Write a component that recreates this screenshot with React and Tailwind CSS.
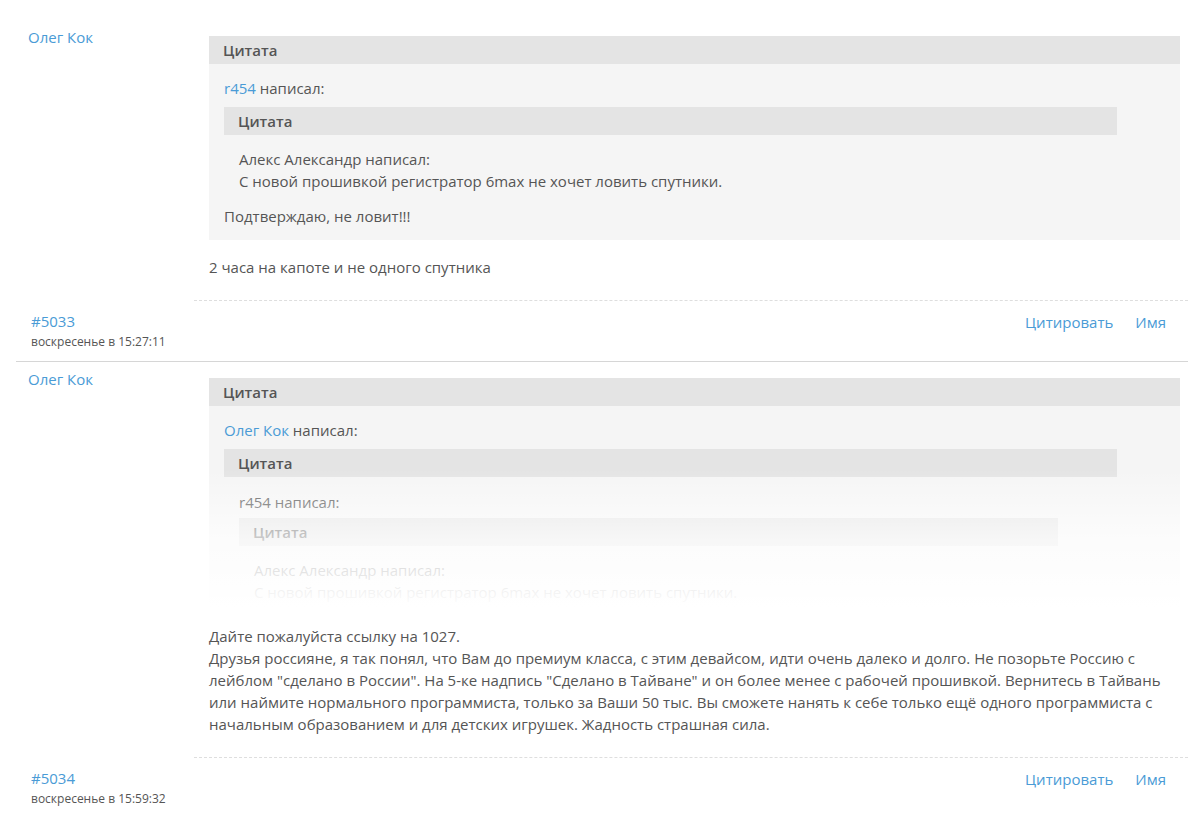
const posts = [
  {
    id: 5033,
    author: 'Олег Кок',
    date: 'воскресенье в 15:27:11',
    clipped: false,
  },
  {
    id: 5034,
    author: 'Олег Кок',
    date: 'воскресенье в 15:59:32',
    clipped: true,
  },
];

const Quote = ({ width, pt = 'pt-[13px]', children, clipped }) => (
  <div className={`bg-[#f5f5f5] ${width} ${clipped ? 'relative max-h-[231px] overflow-hidden' : ''}`}>
    <div className="h-7 bg-[#e4e4e4] pl-[14px] font-semibold leading-7 text-[#555]">Цитата</div>
    <div className={`px-[15px] pb-[13px] ${pt}`}>{children}</div>
    {clipped && (
      <div className="absolute bottom-0 left-0 right-0 h-[140px] bg-gradient-to-b from-white/0 via-white/70 to-white"></div>
    )}
  </div>
);

const FirstBody = () => (
  <>
    <Quote width="w-full">
      <div>
        <a href="#" className="text-[#4a9bd6]">r454</a> написал:
      </div>
      <div className="mt-2">
        <Quote width="w-[893px]">
          <div>Алекс Александр написал:</div>
          <div>С новой прошивкой регистратор 6max не хочет ловить спутники.</div>
        </Quote>
      </div>
      <div>Подтверждаю, не ловит!!!</div>
    </Quote>
    <p className="mt-4">2 часа на капоте и не одного спутника</p>
  </>
);

const SecondBody = () => (
  <>
    <Quote width="w-full" clipped>
      <div>
        <a href="#" className="text-[#4a9bd6]">Олег Кок</a> написал:
      </div>
      <div className="mt-2">
        <Quote width="w-[893px]" pt="pt-[14px]">
          <div>r454 написал:</div>
          <div className="mt-[5px]">
            <Quote width="w-[819px]">
              <div>Алекс Александр написал:</div>
              <div>С новой прошивкой регистратор 6max не хочет ловить спутники.</div>
            </Quote>
          </div>
          <div>Подтверждаю, не ловит!!!</div>
        </Quote>
      </div>
    </Quote>
    <p className="mt-4">
      Дайте пожалуйста ссылку на 1027.
      <br />
      Друзья россияне, я так понял, что Вам до премиум класса, с этим девайсом, идти очень далеко и долго. Не позорьте Россию с лейблом "сделано в России". На 5-ке надпись "Сделано в Тайване" и он более менее с рабочей прошивкой. Вернитесь в Тайвань или наймите нормального программиста, только за Ваши 50 тыс. Вы сможете нанять к себе только ещё одного программиста с начальным образованием и для детских игрушек. Жадность страшная сила.
    </p>
  </>
);

export default function App() {
  return (
    <div className="min-h-[836px] bg-white pt-5 font-['Open_Sans',sans-serif] text-[15px] leading-[22px] text-[#555]">
      <div className="ml-4 mr-[10px]">
        {posts.map((post, i) => (
          <div key={post.id} className={i > 0 ? 'border-t border-[#d6d6d6]' : ''}>
            <div className="flex">
              <div className="w-[178px] shrink-0 pl-3 pt-[6px]">
                <a href="#" className="text-[#4a9bd6]">{post.author}</a>
              </div>
              <div className="flex-1 border-b border-dashed border-[#dedede] pt-[16px] pb-[22px] pl-[15px] pr-2">
                {post.clipped ? <SecondBody /> : <FirstBody />}
              </div>
            </div>
            <div className="flex items-start justify-between pl-[15px] pr-[22px] pt-[9px] pb-[9px]">
              <div>
                <a href="#" className="block text-[15px] leading-[22px] text-[#4a9bd6]">#{post.id}</a>
                <div className="text-[12px] leading-[20px] text-[#555]">{post.date}</div>
              </div>
              <div className="flex gap-[22px] pt-[1px] text-[#4a9bd6]">
                <a href="#">Цитировать</a>
                <a href="#">Имя</a>
              </div>
            </div>
          </div>
        ))}
      </div>
    </div>
  );
}
